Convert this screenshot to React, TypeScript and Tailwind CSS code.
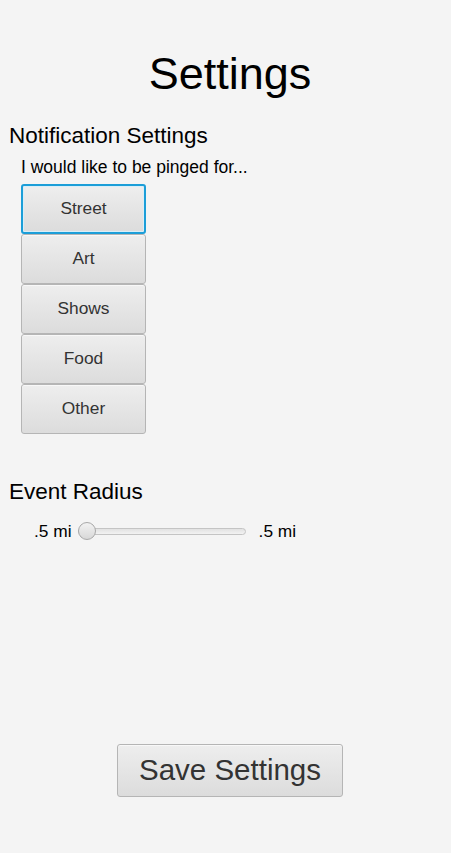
const categories = ['Street', 'Art', 'Shows', 'Food', 'Other'];

function App() {
  return (
    <div
      className="min-h-[853px] bg-[#f4f4f4] pl-[9px] flex flex-col text-black"
      style={{ fontFamily: '"Liberation Sans", Arial, sans-serif' }}
    >
      <h1 className="mt-[51px] text-center text-[45px] leading-[45px]">Settings</h1>

      <h2 className="mt-[28px] text-[22.5px] leading-[23px]">Notification Settings</h2>
      <p className="mt-[12px] ml-[12px] text-[17.5px] leading-[17px]">I would like to be pinged for...</p>

      <div className="mt-[8px] ml-[12px] flex flex-col w-[125px]">
        {categories.map((c, i) => (
          <button
            key={c}
            className={
              i === 0
                ? 'h-[50px] rounded-[3px] border-2 border-[#1c9ed8] bg-gradient-to-b from-[#eeeeee] to-[#dcdcdc] text-[17.33px] text-[#333333] shadow-[inset_0_0_0_1px_#d8eef8]'
                : 'h-[50px] rounded-[3px] border border-[#b5b5b5] bg-gradient-to-b from-[#eeeeee] to-[#dcdcdc] text-[17.33px] text-[#333333] shadow-[inset_0_1px_0_#f8f8f8]'
            }
          >
            {c}
          </button>
        ))}
      </div>

      <h2 className="mt-[46px] text-[22.5px] leading-[23px]">Event Radius</h2>

      <div className="mt-[19px] ml-[25px] flex items-center text-[17.33px] leading-[17px]">
        <span>.5 mi</span>
        <div className="relative ml-[6px] w-[168px] h-[18px] flex items-center">
          <div className="w-full h-[7px] rounded-full border border-[#c4c4c4] bg-gradient-to-b from-[#e2e2e2] to-[#f2f2f2]" />
          <div className="absolute left-0 top-0 w-[18px] h-[18px] rounded-full border border-[#a8a8a8] bg-gradient-to-b from-[#f2f2f2] to-[#d8d8d8]" />
        </div>
        <span className="ml-[13px]">.5 mi</span>
      </div>

      <div className="mt-auto mb-[56px] flex justify-center">
        <button className="w-[226px] h-[53px] rounded-[3px] border border-[#b5b5b5] bg-gradient-to-b from-[#eeeeee] to-[#dcdcdc] text-[29.5px] text-[#333333] shadow-[inset_0_1px_0_#f8f8f8]">
          Save Settings
        </button>
      </div>
    </div>
  );
}

export default App;
